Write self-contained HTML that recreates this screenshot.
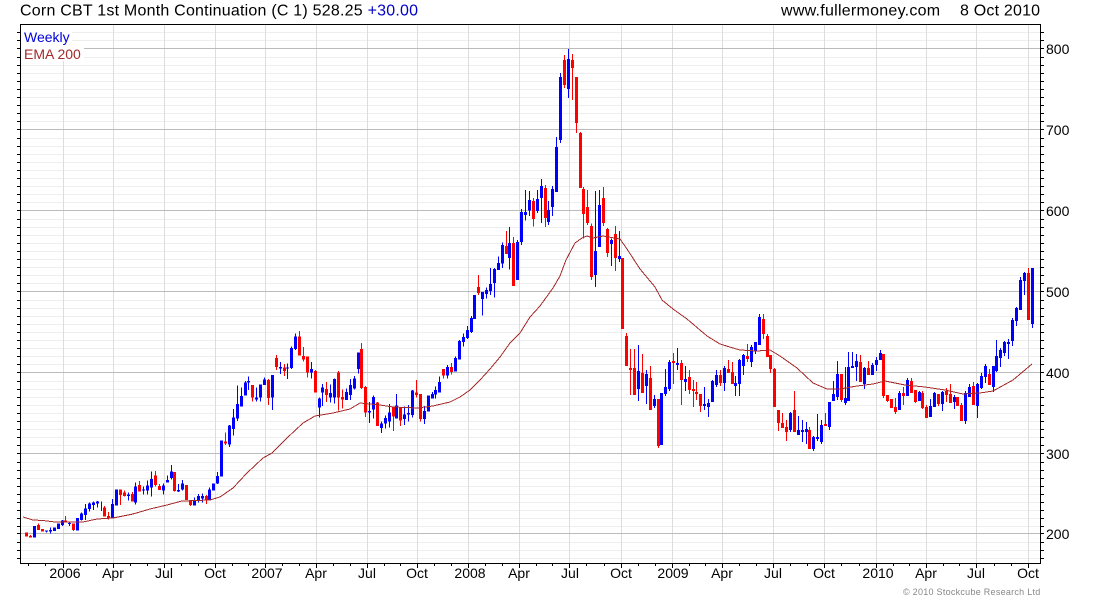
<!DOCTYPE html>
<html><head><meta charset="utf-8"><title>Corn CBT</title>
<style>html,body{margin:0;padding:0;background:#fff;width:1100px;height:600px;overflow:hidden}svg{display:block}text{font-family:"Liberation Sans",Arial,sans-serif}</style></head>
<body>
<svg width="1100" height="600" viewBox="0 0 1100 600" xmlns="http://www.w3.org/2000/svg">
<rect width="1100" height="600" fill="#fff"/>
<g shape-rendering="crispEdges" fill="none">
<path stroke="#eee" stroke-width="1" d="M21 32.5H1040M21 40.5H1040M21 57.5H1040M21 65.5H1040M21 73.5H1040M21 81.5H1040M21 89.5H1040M21 97.5H1040M21 105.5H1040M21 113.5H1040M21 121.5H1040M21 138.5H1040M21 146.5H1040M21 154.5H1040M21 162.5H1040M21 170.5H1040M21 178.5H1040M21 186.5H1040M21 194.5H1040M21 202.5H1040M21 219.5H1040M21 227.5H1040M21 235.5H1040M21 243.5H1040M21 251.5H1040M21 259.5H1040M21 267.5H1040M21 275.5H1040M21 283.5H1040M21 300.5H1040M21 308.5H1040M21 316.5H1040M21 324.5H1040M21 332.5H1040M21 340.5H1040M21 348.5H1040M21 356.5H1040M21 364.5H1040M21 381.5H1040M21 389.5H1040M21 397.5H1040M21 405.5H1040M21 413.5H1040M21 421.5H1040M21 429.5H1040M21 437.5H1040M21 445.5H1040M21 462.5H1040M21 470.5H1040M21 478.5H1040M21 486.5H1040M21 494.5H1040M21 502.5H1040M21 510.5H1040M21 518.5H1040M21 526.5H1040M21 542.5H1040M21 550.5H1040M21 558.5H1040"/>
<path stroke="#ddd" stroke-width="1" d="M63.5 25V563M113.5 25V563M164.5 25V563M215.5 25V563M265.5 25V563M316.5 25V563M367.5 25V563M417.5 25V563M468.5 25V563M519.5 25V563M569.5 25V563M621.5 25V563M672.5 25V563M722.5 25V563M773.5 25V563M824.5 25V563M876.5 25V563M926.5 25V563M976.5 25V563M1028.5 25V563"/>
<path stroke="#bbb" stroke-width="1" d="M21 48.5H1040M21 129.5H1040M21 210.5H1040M21 291.5H1040M21 372.5H1040M21 453.5H1040M21 533.5H1040"/>
<rect x="21" y="25" width="51" height="19" fill="#fff"/>
<rect x="21" y="44" width="63" height="17" fill="#fff"/>
</g>

<g shape-rendering="crispEdges" fill="none">
<!-- A -->
<g transform="translate(0,450) scale(.33333)">
<path stroke="#00f" stroke-width="3" d="M139 241V248M151 232V251M187 210V228M209 214V228M244 188V212M256 162V210M268 157V185M280 155V180M292 153V173M304 155V183M337 147V205M385 127V152M406 97V164M430 110V134M442 92V134M454 64V140M490 100V134M502 76V98M514 45V88M535 102V126M547 90V122M583 142V167M595 132V158M607 130V157M628 112V150M640 100V122M652 66V102"/>
<path stroke="#f00" stroke-width="3" d="M91 255V263M115 220V240M197 198V218M221 220V243M313 168V200M325 186V208M361 118V165M373 122V140M397 126V155M418 93V125M466 63V110M478 102V120M523 66V125M571 150V168M619 135V162"/>
<path stroke="#00f" stroke-width="9" d="M103 228V263M139 241V245M151 240V245M163 232V243M175 220V237M187 212V225M209 219V222M232 204V242M244 190V210M256 175V195M268 160V177M280 157V165M292 154V160M337 162V205M349 118V167M385 133V138M406 109V158M430 118V122M442 106V122M454 87V113M490 107V122M502 90V98M514 64V84M535 120V125M547 100V118M583 150V167M595 138V150M607 138V145M628 118V150M640 100V122M652 78V100"/>
<path stroke="#f00" stroke-width="9" d="M79 247V260M91 258V263M115 225V240M127 237V245M197 212V218M221 220V240M313 172V200M325 198V205M361 118V135M373 128V138M397 132V155M418 105V125M466 76V105M478 108V120M523 66V123M559 105V150M571 150V165M619 138V150"/>
</g>
<!-- B -->
<g transform="translate(200,320) scale(.33333)">
<path stroke="#00f" stroke-width="3" d="M88 315V381M100 267V347M112 197V303M124 203V260M136 183V226M145 170V210M169 203V245M181 194V245M193 172V195M217 165V270M241 126V162M262 130V177M274 80V147M286 40V90M334 126V175M358 233V293M367 192V258M391 193V247M403 175V250M439 206V240M451 177V240M463 168V208M475 97V160M508 246V309M520 226V295M544 305V339M556 287V325M568 252V323M589 222V295M613 260V315M625 255V305M637 210V292M673 258V312M685 227V275M697 216V236M706 200V236M718 170V218"/>
<path stroke="#f00" stroke-width="3" d="M76 338V375M157 195V245M205 177V255M229 105V150M253 132V168M298 33V107M310 81V125M322 110V173M346 150V218M379 186V246M415 153V272M427 208V265M484 69V207M496 198V291M532 246V318M580 261V333M601 262V318M649 180V232M661 222V305"/>
<path stroke="#00f" stroke-width="9" d="M64 362V470M88 317V373M100 293V327M112 252V296M124 228V260M136 188V226M145 183V188M169 232V238M181 194V233M193 178V195M217 165V232M241 141V146M262 142V146M274 84V144M286 50V87M334 147V158M358 236V262M367 202V218M391 219V233M403 177V232M439 216V240M451 195V225M463 175V205M475 97V147M508 273V278M520 231V269M544 310V324M556 294V310M568 277V304M589 256V295M613 283V297M625 279V284M637 212V285M673 273V297M685 227V275M697 222V236M706 210V224M718 186V218"/>
<path stroke="#f00" stroke-width="9" d="M76 364V370M157 195V233M205 180V234M229 114V141M253 142V153M298 50V107M310 108V118M322 110V158M346 153V218M379 207V225M415 158V233M427 231V239M484 87V204M496 201V277M532 247V318M580 261V290M601 262V302M649 217V225M661 222V297"/>
</g>
<!-- C -->
<g transform="translate(440,200) scale(.33333)">
<path stroke="#00f" stroke-width="3" d="M22 495V536M46 470V515M58 420V479M70 400V440M82 378V417M94 348V399M127 276V347M139 263V296M151 204V285M163 204V293M175 170V210M187 128V204M208 81V208M232 120V240M244 27V135"/>
<path stroke="#f00" stroke-width="3" d="M10 507V536M34 489V524M115 225V285M199 93V162M220 111V258"/>
<path stroke="#00f" stroke-width="9" d="M22 501V527M46 474V515M58 423V479M70 411V426M82 390V414M94 354V396M103 285V357M127 276V297M139 270V282M151 252V273M163 207V249M175 189V210M187 135V191M208 129V174M232 126V240M244 36V126"/>
<path stroke="#f00" stroke-width="9" d="M10 507V527M34 501V516M115 261V279M199 138V162M220 129V258"/>
</g>
<!-- D -->
<g transform="translate(500,30) scale(.33333)">
<path stroke="#00f" stroke-width="3" d="M76 480V572M88 483V558M112 480V549M124 447V579M145 513V585M157 468V558M169 321V486M181 129V339M205 57V204"/>
<path stroke="#f00" stroke-width="3" d="M100 504V590M136 465V591M193 75V174M217 72V210M229 141V309M241 306V474M250 471V625M262 480V585"/>
<path stroke="#00f" stroke-width="9" d="M76 546V555M88 510V542M112 507V543M124 468V504M145 540V576M157 477V531M169 351V486M181 141V330M205 87V177"/>
<path stroke="#f00" stroke-width="9" d="M100 513V567M136 474V564M193 90V165M217 90V114M229 141V279M241 309V474M250 477V552M262 531V579"/>
</g>
<!-- E -->
<g transform="translate(560,200) scale(.33333)">
<path stroke="#00f" stroke-width="3" d="M106 -27V261M118 -30V141M154 115V198M178 93V186M235 435V603"/>
<path stroke="#f00" stroke-width="3" d="M94 70V240M130 -39V78M142 84V171M166 78V213M199 399V498M211 447V585M223 447V585"/>
<path stroke="#00f" stroke-width="9" d="M106 153V225M118 15V141M154 120V132M178 168V177M235 513V567"/>
<path stroke="#f00" stroke-width="9" d="M94 78V231M130 -6V69M142 87V159M166 102V174M187 174V387M199 408V498M211 504V510M223 504V585"/>
</g>
<!-- F -->
<g transform="translate(640,310) scale(.33333)">
<path stroke="#00f" stroke-width="3" d="M20 180V282M44 255V294M65 249V405M77 177V258M89 150V243M113 114V180M137 168V243M194 231V300M206 267V321M218 210V276M230 180V231M254 168V243M287 198V258M299 147V258M311 132V195M335 105V171M347 96V132M359 12V105M452 306V366M476 318V375M488 330V396M500 336V402M520 378V423M532 312V393M544 330V402M568 276V360M580 213V273M592 153V270M616 171V285M625 126V273M637 126V174M649 132V213M673 171V237M697 159V195M709 141V183M721 120V150"/>
<path stroke="#f00" stroke-width="3" d="M8 132V249M32 168V300M56 267V414M101 129V222M125 150V285M149 180V252M161 210V291M170 216V270M182 252V306M242 180V228M266 150V189M278 156V222M323 102V156M371 12V87M383 72V141M392 135V189M404 174V291M416 300V363M428 309V354M440 330V393M464 243V366M508 351V417M556 309V348M604 192V276M661 135V216M685 153V195"/>
<path stroke="#00f" stroke-width="9" d="M20 192V228M44 267V288M65 249V405M77 231V252M89 156V237M113 159V165M137 207V216M194 282V288M206 279V291M218 213V276M230 195V225M254 174V219M287 219V228M299 150V222M311 135V168M335 111V156M347 96V123M359 21V105M452 309V360M476 360V375M488 360V366M500 357V366M520 381V417M532 381V387M544 345V396M568 276V351M580 252V273M592 192V261M616 264V279M625 171V273M637 168V174M649 153V171M673 174V222M697 165V195M709 150V165M721 129V150"/>
<path stroke="#f00" stroke-width="9" d="M8 189V249M32 204V300M56 267V408M101 153V159M125 159V210M149 201V240M161 237V243M170 246V252M182 252V288M242 195V219M266 177V189M278 186V222M323 138V147M371 27V72M383 78V141M392 135V177M404 177V291M416 300V339M428 339V354M440 351V366M464 300V366M508 360V417M556 342V348M604 192V270M661 156V216M685 174V195"/>
</g>
<!-- H -->
<g transform="translate(870,340) scale(.33333)">
<path stroke="#00f" stroke-width="3" d="M88 153V210M112 114V168M148 153V183M181 177V231M193 156V201M217 153V213M253 165V207M286 153V252M298 132V171M322 129V234"/>
<path stroke="#f00" stroke-width="3" d="M40 42V174M52 165V186M76 174V222M100 141V195M124 114V159M136 150V189M157 153V207M169 195V234M205 162V198M229 144V186M241 132V189M262 171V198M274 189V243M310 126V195"/>
<path stroke="#00f" stroke-width="9" d="M88 159V210M112 120V168M148 156V183M181 198V231M193 159V201M217 156V192M253 171V186M286 159V243M298 141V171M322 132V198"/>
<path stroke="#f00" stroke-width="9" d="M40 42V168M52 165V183M64 177V204M76 201V216M100 159V168M124 123V159M136 150V186M157 159V204M169 201V234M205 162V192M229 153V165M241 162V189M262 171V198M274 195V243M310 138V195"/>
</g>
<!-- G -->
<g transform="translate(950,250) scale(.33333)">
<path stroke="#00f" stroke-width="3" d="M94 369V417M106 342V399M130 348V426M139 270V366M151 294V351M163 273V318M175 267V327M187 204V288M199 171V228M211 81V180M223 66V135M247 54V234"/>
<path stroke="#f00" stroke-width="3" d="M118 357V405M235 54V210"/>
<path stroke="#00f" stroke-width="9" d="M94 378V414M106 348V381M130 348V411M139 318V363M151 300V324M163 276V309M175 276V282M187 210V273M199 174V213M211 90V180M223 69V93M247 54V222"/>
<path stroke="#f00" stroke-width="9" d="M118 372V405M235 69V210"/>
</g>
</g>

<polyline shape-rendering="crispEdges" fill="none" stroke="#a52a2a" stroke-width="1" points="23,517 33,520 43,520.5 55,522 83,522 97,519 113,518 133,514 150,509 167,505 182,501 210,500 220,497 233,488 247,473 263,458 272,453 287,438 303,423 315,416 333,413 350,409 360,403 380,405 393,407 417,408 433,406 450,402 460,397 470,390 480,380 490,369 500,357 510,343 520,333 530,317 540,306 553,288 560,276 566,260 575,243 582,238 587,236 593,238 603,236 620,239 627,249 640,269 655,287 662,300 673,309 687,319 707,336 720,344 733,348 740,350 757,351 770,350 780,356 797,368 813,383 827,389 840,389 857,386 873,384 885,381 905,385 925,387 945,390 963,394 980,393 993,391 1013,380 1032,364"/>

<g shape-rendering="crispEdges" fill="none" stroke="#000" stroke-width="1">
<path d="M20.5 24.5H1040.5V563.5H20.5Z"/>
<path d="M17 32.5H20M17 40.5H20M17 48.5H20M17 57.5H20M17 65.5H20M17 73.5H20M17 81.5H20M17 89.5H20M17 97.5H20M17 105.5H20M17 113.5H20M17 121.5H20M17 129.5H20M17 138.5H20M17 146.5H20M17 154.5H20M17 162.5H20M17 170.5H20M17 178.5H20M17 186.5H20M17 194.5H20M17 202.5H20M17 210.5H20M17 219.5H20M17 227.5H20M17 235.5H20M17 243.5H20M17 251.5H20M17 259.5H20M17 267.5H20M17 275.5H20M17 283.5H20M17 291.5H20M17 300.5H20M17 308.5H20M17 316.5H20M17 324.5H20M17 332.5H20M17 340.5H20M17 348.5H20M17 356.5H20M17 364.5H20M17 372.5H20M17 381.5H20M17 389.5H20M17 397.5H20M17 405.5H20M17 413.5H20M17 421.5H20M17 429.5H20M17 437.5H20M17 445.5H20M17 453.5H20M17 462.5H20M17 470.5H20M17 478.5H20M17 486.5H20M17 494.5H20M17 502.5H20M17 510.5H20M17 518.5H20M17 526.5H20M17 533.5H20M17 542.5H20M17 550.5H20M17 558.5H20"/>
<path d="M1041 32.5H1044M1041 40.5H1044M1041 48.5H1044M1041 57.5H1044M1041 65.5H1044M1041 73.5H1044M1041 81.5H1044M1041 89.5H1044M1041 97.5H1044M1041 105.5H1044M1041 113.5H1044M1041 121.5H1044M1041 129.5H1044M1041 138.5H1044M1041 146.5H1044M1041 154.5H1044M1041 162.5H1044M1041 170.5H1044M1041 178.5H1044M1041 186.5H1044M1041 194.5H1044M1041 202.5H1044M1041 210.5H1044M1041 219.5H1044M1041 227.5H1044M1041 235.5H1044M1041 243.5H1044M1041 251.5H1044M1041 259.5H1044M1041 267.5H1044M1041 275.5H1044M1041 283.5H1044M1041 291.5H1044M1041 300.5H1044M1041 308.5H1044M1041 316.5H1044M1041 324.5H1044M1041 332.5H1044M1041 340.5H1044M1041 348.5H1044M1041 356.5H1044M1041 364.5H1044M1041 372.5H1044M1041 381.5H1044M1041 389.5H1044M1041 397.5H1044M1041 405.5H1044M1041 413.5H1044M1041 421.5H1044M1041 429.5H1044M1041 437.5H1044M1041 445.5H1044M1041 453.5H1044M1041 462.5H1044M1041 470.5H1044M1041 478.5H1044M1041 486.5H1044M1041 494.5H1044M1041 502.5H1044M1041 510.5H1044M1041 518.5H1044M1041 526.5H1044M1041 533.5H1044M1041 542.5H1044M1041 550.5H1044M1041 558.5H1044"/>
<path d="M28.5 564V566M45.5 564V566M63.5 564V568M80.5 564V566M96.5 564V566M113.5 564V568M130.5 564V566M147.5 564V566M164.5 564V568M181.5 564V566M198.5 564V566M215.5 564V568M232.5 564V566M248.5 564V566M265.5 564V568M282.5 564V566M299.5 564V566M316.5 564V568M333.5 564V566M350.5 564V566M367.5 564V568M384.5 564V566M400.5 564V566M417.5 564V568M434.5 564V566M451.5 564V566M468.5 564V568M485.5 564V566M502.5 564V566M519.5 564V568M536.5 564V566M552.5 564V566M569.5 564V568M586.5 564V566M604.5 564V566M621.5 564V568M638.5 564V566M655.5 564V566M672.5 564V568M689.5 564V566M705.5 564V566M722.5 564V568M739.5 564V566M756.5 564V566M773.5 564V568M790.5 564V566M807.5 564V566M824.5 564V568M841.5 564V566M859.5 564V566M876.5 564V568M893.5 564V566M909.5 564V566M926.5 564V568M943.5 564V566M959.5 564V566M976.5 564V568M994.5 564V566M1011.5 564V566M1028.5 564V568"/>
</g>

<text x="20" y="15.5" font-size="16" fill="#000" letter-spacing=".22">Corn CBT 1st Month Continuation (C 1) 528.25 <tspan fill="#0000c8">+30.00</tspan></text>
<text x="781" y="15.5" font-size="16" fill="#000" letter-spacing=".26">www.fullermoney.com</text>
<text x="960" y="15.5" font-size="16" fill="#000" letter-spacing=".2">8 Oct 2010</text>
<text x="24" y="42" font-size="14" fill="#0000e0">Weekly</text>
<text x="24" y="59" font-size="14" fill="#a52a2a">EMA 200</text>
<g font-size="14" fill="#000">
<text x="1046" y="54">800</text><text x="1046" y="135">700</text><text x="1046" y="216">600</text><text x="1046" y="297">500</text><text x="1046" y="378">400</text><text x="1046" y="459">300</text><text x="1046" y="539">200</text>
</g>
<g font-size="14" fill="#000" text-anchor="middle">
<text x="65" y="578">2006</text><text x="113" y="578">Apr</text><text x="164" y="578">Jul</text><text x="215" y="578">Oct</text>
<text x="267" y="578">2007</text><text x="316" y="578">Apr</text><text x="367" y="578">Jul</text><text x="417" y="578">Oct</text>
<text x="470" y="578">2008</text><text x="519" y="578">Apr</text><text x="570" y="578">Jul</text><text x="621" y="578">Oct</text>
<text x="673" y="578">2009</text><text x="722" y="578">Apr</text><text x="773" y="578">Jul</text><text x="824" y="578">Oct</text>
<text x="878" y="578">2010</text><text x="926" y="578">Apr</text><text x="976" y="578">Jul</text><text x="1028" y="578">Oct</text>
</g>
<text x="903" y="595" font-size="9" fill="#888" letter-spacing=".27">© 2010 Stockcube Research Ltd</text>
</svg>
</body></html>
